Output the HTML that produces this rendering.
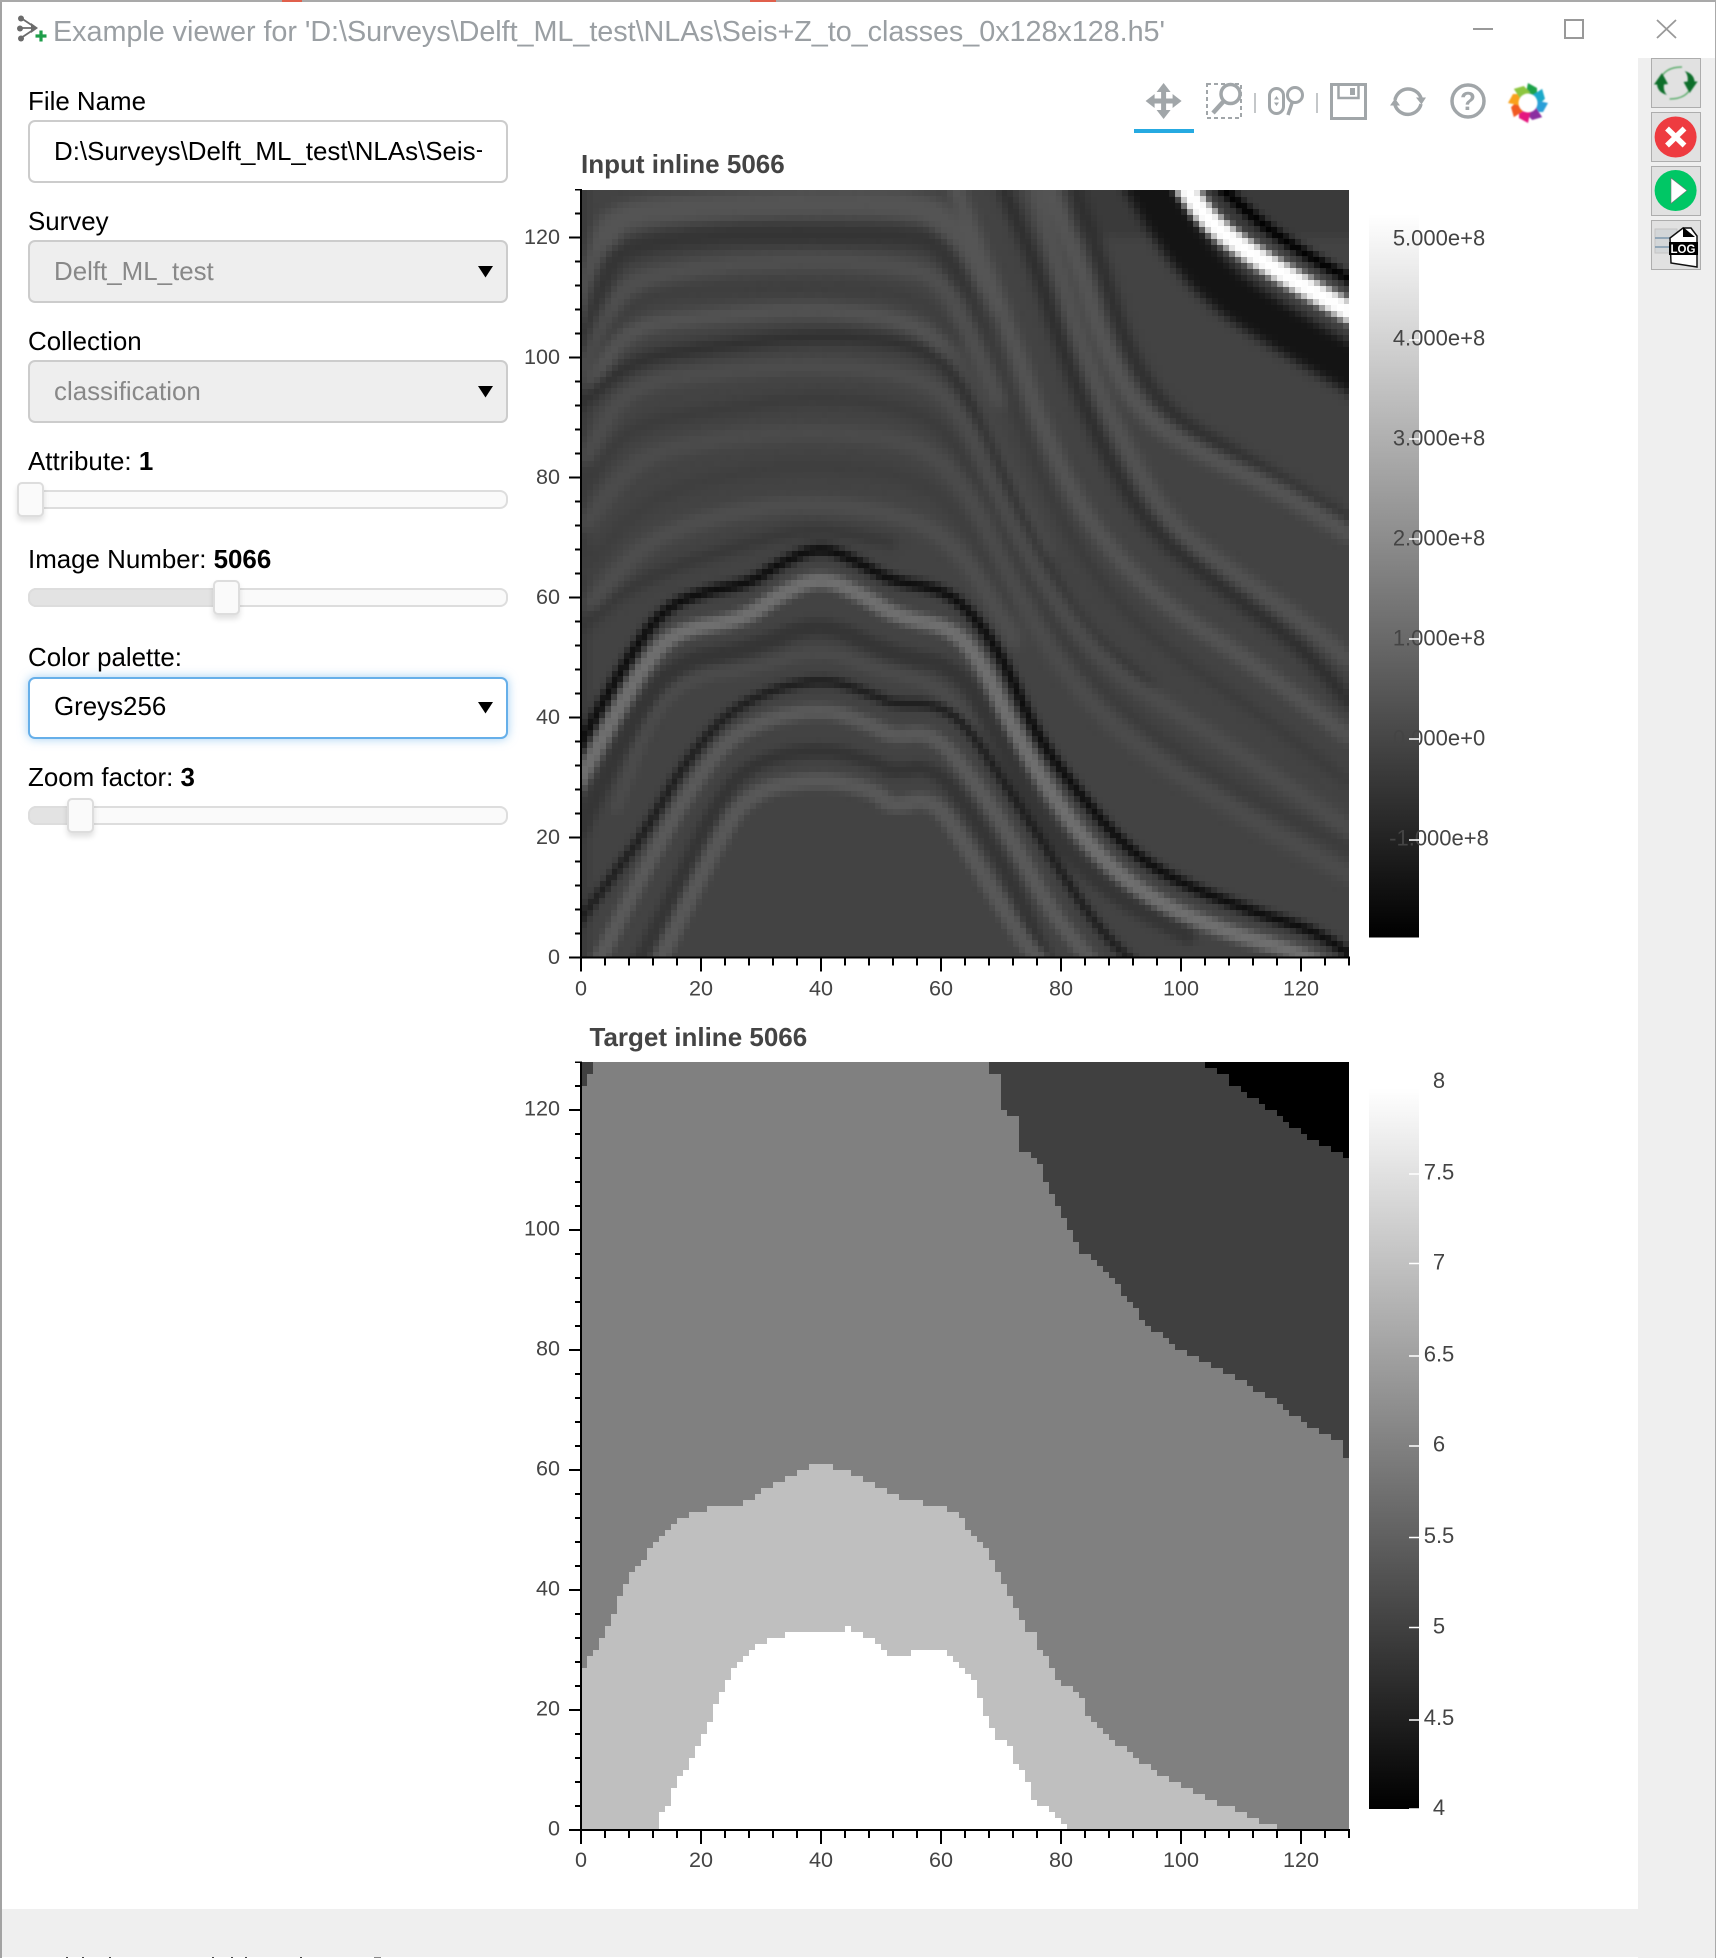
<!DOCTYPE html>
<html><head><meta charset="utf-8"><title>Example viewer</title>
<style>
html,body{margin:0;padding:0;background:#fff;width:1716px;height:1958px;overflow:hidden}
.b{position:absolute;box-sizing:border-box}
.box{left:28px;width:479.5px;border:2.5px solid #ccc;border-radius:7px;background:#fff}
.dis{background:#eee}
.track{left:28px;width:479.5px;height:19px;border:2px solid #ddd;border-radius:8px;background:#fafafa}
.fill{height:19px;border:2px solid #ddd;border-radius:8px 0 0 8px;background:#e3e3e3;border-right:0}
.h{width:27px;height:35px;border:2px solid #ddd;border-radius:5px;background:#fafafa;box-shadow:0 4px 6px rgba(0,0,0,.12)}
svg{position:absolute;left:0;top:0}
text{font-family:"Liberation Sans",Arial,sans-serif}
.l{font-size:25.9px;fill:#000}
.t{font-size:21.6px;fill:#444}
.c{font-size:22px;fill:#444;text-anchor:middle}
.x{text-anchor:middle}
.y{text-anchor:end}
.tt{font-size:26px;font-weight:bold;fill:#444}
</style></head><body>
<div class="b" style="left:1638px;top:58px;width:78px;height:1900px;background:#efefef"></div>
<div class="b" style="left:0;top:1909px;width:1716px;height:48px;background:#efefef"></div>
<div class="b" style="left:0;top:0;width:2px;height:1958px;background:#a3a3a3"></div>
<div class="b" style="left:1715px;top:0;width:1px;height:1958px;background:#aaa"></div>
<div class="b" style="left:0;top:0;width:1716px;height:2px;background:#a9a9a9"></div>
<div class="b" style="left:282px;top:0;width:20px;height:2px;background:#e0604c"></div>
<div class="b" style="left:750px;top:0;width:26px;height:2px;background:#e0604c"></div>

<div class="b box" style="top:120px;height:62.5px"></div>
<div class="b box dis" style="top:240px;height:62.5px"></div>
<div class="b box dis" style="top:360px;height:62.5px"></div>
<div class="b track" style="top:490px"></div>
<div class="b h" style="left:17px;top:482px"></div>
<div class="b track" style="top:588px"></div>
<div class="b fill" style="left:28px;top:588px;width:190px"></div>
<div class="b h" style="left:213px;top:580px"></div>
<div class="b box" style="top:676.5px;height:62.5px;border-color:#66afe9;box-shadow:0 0 10px rgba(102,175,233,.6)"></div>
<div class="b track" style="top:806px"></div>
<div class="b fill" style="left:28px;top:806px;width:45px"></div>
<div class="b h" style="left:67px;top:798px"></div>

<div class="b" style="left:66px;top:1957px;width:2px;height:1px;background:#444"></div>
<div class="b" style="left:82px;top:1957px;width:2px;height:1px;background:#444"></div>
<div class="b" style="left:109px;top:1957px;width:2px;height:1px;background:#444"></div>
<div class="b" style="left:212px;top:1957px;width:2px;height:1px;background:#444"></div>
<div class="b" style="left:231px;top:1957px;width:2px;height:1px;background:#444"></div>
<div class="b" style="left:245px;top:1957px;width:2px;height:1px;background:#444"></div>
<div class="b" style="left:300px;top:1957px;width:2px;height:1px;background:#444"></div>
<div class="b" style="left:374px;top:1957px;width:7px;height:1px;background:#888"></div>

<svg width="1716" height="1958" viewBox="0 0 1716 1958" xmlns="http://www.w3.org/2000/svg">
<defs>
<linearGradient id="g" x1="0" y1="0" x2="0" y2="1"><stop offset="0" stop-color="#fff"/><stop offset="1" stop-color="#000"/></linearGradient>
<clipPath id="cp"><rect x="40" y="125" width="442" height="52"/></clipPath>
<filter id="bl" x="-10%" y="-10%" width="120%" height="120%" color-interpolation-filters="sRGB"><feGaussianBlur stdDeviation="10"/></filter>
<filter id="bl2" x="-10%" y="-10%" width="120%" height="120%" color-interpolation-filters="sRGB"><feGaussianBlur stdDeviation="6.5"/></filter>
<filter id="sb" x="-20%" y="-20%" width="140%" height="140%"><feGaussianBlur stdDeviation=".7"/></filter>
<filter id="pix" filterUnits="userSpaceOnUse" primitiveUnits="userSpaceOnUse" x="0" y="0" width="768" height="768" color-interpolation-filters="sRGB">
<feFlood x="3" y="3" width="1" height="1" flood-color="#000"/>
<feComposite width="6" height="6"/>
<feTile result="a"/>
<feComposite in="SourceGraphic" in2="a" operator="in"/>
<feMorphology operator="dilate" radius="3"/>
</filter>
</defs>

<!-- title bar -->
<g stroke="#6b6b6b" stroke-width="1.8" fill="#6b6b6b">
<path d="M21 18L36 28M20 28H36M21 38L36 28" fill="none"/>
<circle cx="21" cy="18.5" r="3" stroke="none"/><circle cx="20" cy="28.5" r="3" stroke="none"/><circle cx="21" cy="38.5" r="3" stroke="none"/>
<path d="M31 23l7 5-7 5z" stroke="none"/>
</g>
<path d="M41 30.5v11M35.5 36h11" stroke="#1e9e4a" stroke-width="3.2"/>
<text x="53" y="41" font-size="28.8" fill="#9a9fa3" textLength="1112" lengthAdjust="spacing">Example viewer for 'D:\Surveys\Delft_ML_test\NLAs\Seis+Z_to_classes_0x128x128.h5'</text>
<path d="M1473 29h20" stroke="#999" stroke-width="2"/>
<rect x="1565" y="20" width="18" height="18" fill="none" stroke="#999" stroke-width="2"/>
<path d="M1657 20l19 18M1676 20l-19 18" stroke="#999" stroke-width="1.8"/>

<!-- widgets text -->
<text class="l" x="28" y="110">File Name</text>
<g clip-path="url(#cp)"><text class="l" x="54" y="160">D:\Surveys\Delft_ML_test\NLAs\Seis+Z_to_classes_0x128x128.h5</text></g>
<text class="l" x="28" y="230">Survey</text>
<text class="l" x="54" y="280" style="fill:#888">Delft_ML_test</text>
<path d="M478 266h15l-7.5 11.5z" fill="#000"/>
<text class="l" x="28" y="350">Collection</text>
<text class="l" x="54" y="400" style="fill:#888">classification</text>
<path d="M478 386h15l-7.5 11.5z" fill="#000"/>
<text class="l" x="28" y="470">Attribute: <tspan font-weight="bold">1</tspan></text>
<text class="l" x="28" y="568">Image Number: <tspan font-weight="bold">5066</tspan></text>
<text class="l" x="28" y="666">Color palette:</text>
<text class="l" x="54" y="715">Greys256</text>
<path d="M478 702h15l-7.5 11.5z" fill="#000"/>
<text class="l" x="28" y="786">Zoom factor: <tspan font-weight="bold">3</tspan></text>

<!-- bokeh toolbar -->
<g fill="#a1a6a9">
<path transform="translate(1163.6 101)" d="M0-18L7-9H2.5V-2.5H9V-7L18 0 9 7V2.5H2.5V9H7L0 18-7 9H-2.5V2.5H-9V7L-18 0-9-7V-2.5H-2.5V-9H-7Z"/>
<rect x="1134" y="129" width="60" height="4" fill="#26aae1"/>
<rect x="1254" y="93" width="2" height="20" fill="#c4c7c9"/>
<rect x="1316" y="93" width="2" height="20" fill="#c4c7c9"/>
</g>
<g fill="none" stroke="#a1a6a9">
<rect x="1207" y="84" width="34" height="34" stroke-width="2" stroke-dasharray="4 3"/>
<circle cx="1230.5" cy="94" r="9.5" stroke-width="3.5" fill="#fff"/>
<path d="M1223 102l-10 11" stroke-width="4.5"/>
<rect x="1269.5" y="88.5" width="14" height="25" rx="7" stroke-width="3"/>
<path d="M1276.5 96l-2.5 3.5h5zM1276.5 106l-2.5-3.5h5z" fill="#a1a6a9" stroke="none"/>
<circle cx="1295" cy="95" r="7.5" stroke-width="3"/>
<path d="M1292 103l-4 12" stroke-width="3.5"/>
<rect x="1331.5" y="84.5" width="34" height="34" stroke-width="3"/>
<path d="M1338.5 85v13h20V85" stroke-width="2.5"/>
<rect x="1350" y="88" width="5" height="7" fill="#a1a6a9" stroke="none"/>
<path d="M1395 100A13.5 13.5 0 0 1 1421 98M1421 104A13.5 13.5 0 0 1 1395 105" stroke-width="3.5"/>
<path d="M1416 97.5h10l-4.5 7zM1390 105.5h10l-5-7z" fill="#a1a6a9" stroke="none"/>
<circle cx="1468" cy="101" r="16" stroke-width="3.5"/>
</g>
<text x="1468" y="110" font-size="26" font-weight="bold" text-anchor="middle" fill="#a1a6a9">?</text>
<g transform="translate(1528 103)">
<g filter="url(#sb)">
<path transform="rotate(0)" d="M0-20L9-15 9-6-3-6Z" fill="#1fa24a"/>
<path transform="rotate(45)" d="M0-20L9-15 9-6-3-6Z" fill="#1fa9c9"/>
<path transform="rotate(90)" d="M0-20L9-15 9-6-3-6Z" fill="#2b9fd8"/>
<path transform="rotate(135)" d="M0-20L9-15 9-6-3-6Z" fill="#8b2fa0"/>
<path transform="rotate(180)" d="M0-20L9-15 9-6-3-6Z" fill="#e5157f"/>
<path transform="rotate(225)" d="M0-20L9-15 9-6-3-6Z" fill="#f15a22"/>
<path transform="rotate(270)" d="M0-20L9-15 9-6-3-6Z" fill="#f9a11b"/>
<path transform="rotate(315)" d="M0-20L9-15 9-6-3-6Z" fill="#8dc63f"/>
</g>
<circle r="9.5" fill="#fff" filter="url(#sb)"/>
</g>

<!-- right toolbar -->
<g fill="#e1e1e1" stroke="#adadad" stroke-width="1">
<rect x="1651.5" y="58.5" width="49" height="49"/>
<rect x="1651.5" y="112.5" width="49" height="49"/>
<rect x="1651.5" y="166.5" width="49" height="49"/>
<rect x="1651.5" y="220.5" width="49" height="49"/>
</g>
<g id="ra" filter="url(#sb)">
<path d="M1661 80C1662 72 1670 67 1682 67" fill="none" stroke="#5fae6e" stroke-width="1.5"/>
<path d="M1654 84.5L1662 73 1668 84 1664 84.5C1663.500 88 1664 92 1667 95 1660 93 1657.500 89 1657 84.500Z" fill="#0f6e2c"/>
<path transform="rotate(180 1675.800 83)" d="M1661 80C1662 72 1670 67 1682 67" fill="none" stroke="#5fae6e" stroke-width="1.500"/>
<path transform="rotate(180 1675.800 83)" d="M1654 84.5L1662 73 1668 84 1664 84.5C1663.500 88 1664 92 1667 95 1660 93 1657.500 89 1657 84.500Z" fill="#0f6e2c"/>
</g>
<ellipse cx="1675.6" cy="137" rx="21" ry="20.5" fill="#ee3b40"/>
<path d="M1667 128.5l17.5 17M1684.5 128.5l-17.5 17" stroke="#fff" stroke-width="5.5"/>
<ellipse cx="1675.6" cy="190.5" rx="21" ry="20.5" fill="#00c765"/>
<path d="M1671 178l16 12.5-16 13z" fill="#fff" stroke="#777" stroke-width=".6"/>
<g>
<rect x="1655" y="229" width="22" height="24" fill="#d3d6d8" stroke="#c4c4c4"/>
<path d="M1655 238h22M1655 247h22" stroke="#7d97ad" stroke-width="1.5"/>
<path d="M1670 238l13-10 8 0 6 8v31l-26-4z" fill="#fff" stroke="#111" stroke-width="1.5"/>
<path d="M1683 227l12 10h-12z" fill="#000"/>
<rect x="1669" y="242" width="29" height="13" fill="#000"/>
<text x="1683" y="253" font-size="11.500" font-weight="bold" fill="#fff" text-anchor="middle">LOG</text>
</g>

<!-- plot 1 -->
<text class="tt" x="581" y="173">Input inline 5066</text>
<svg x="581" y="190" width="768" height="768" viewBox="0 0 768 768">
<rect width="768" height="768" fill="#434343"/>
<g filter="url(#pix)">
<rect width="768" height="768" fill="#434343"/>
<g transform="scale(.5103) translate(-41 -38)">
<g filter="url(#bl)" fill="none" stroke-linejoin="round" stroke-linecap="round">
<rect x="0" y="0" width="55" height="1600" fill="#3a3a3a" stroke="none"/>
<rect x="1000" y="0" width="600" height="130" fill="#3a3a3a" stroke="none"/>
<polyline stroke="#545454" stroke-width="50" points="50,280 80,150 110,85 300,70 510,62 730,68 775,130 830,260"/>
<polyline stroke="#343434" stroke-width="42" points="50,340 85,210 120,150 300,125 510,125 700,128 750,150 800,240 850,380"/>
<polyline stroke="#505050" stroke-width="30" points="50,390 90,290 130,215 300,185 510,175 700,190 760,230 800,310 860,450"/>
<polyline stroke="#3d3d3d" stroke-width="22" points="60,400 130,250 300,232 510,228 700,240 780,330"/>
<polyline stroke="#555" stroke-width="26" points="60,420 130,305 300,285 510,270 700,295 780,380 860,560 950,750"/>
<polyline stroke="#2f2f2f" stroke-width="28" points="40,460 140,370 300,345 510,320 700,340 780,400 850,560 930,740 1020,900 1150,1010"/>
<polyline stroke="#4e4e4e" stroke-width="26" points="50,560 130,420 300,395 510,380 700,400 790,470 860,640 960,830 1080,980 1300,1120 1546,1290"/>
<polyline stroke="#3b3b3b" stroke-width="28" points="50,620 130,500 300,470 510,440 710,470 790,550 870,730 980,920 1100,1060 1300,1200 1546,1330"/>
<polyline stroke="#4c4c4c" stroke-width="30" points="50,690 150,560 300,525 510,510 700,530 800,620 880,800 1000,1000 1130,1130 1350,1270 1546,1380"/>
<polyline stroke="#3e3e3e" stroke-width="30" points="50,780 170,640 350,590 510,575 700,600 800,690 880,860"/>
<polyline stroke="#4f4f4f" stroke-width="28" points="60,850 170,720 350,665 510,650 700,680 800,760 890,920"/>
<polyline stroke="#363636" stroke-width="24" points="40,900 150,800 400,720 510,700 650,730"/>
<!-- right family -->
<polyline stroke="#2e2e2e" stroke-width="30" points="1010,38 1060,180 1110,350 1190,480 1350,570 1546,690"/>
<polyline stroke="#565656" stroke-width="30" points="960,38 1020,190 1060,330 1130,470 1250,550 1400,620 1546,710"/>
<polyline stroke="#545454" stroke-width="26" points="930,38 975,180 1020,340 1090,510 1190,690 1320,790 1450,880 1546,960"/>
<polyline stroke="#2d2d2d" stroke-width="30" points="870,38 930,180 980,340 1050,520 1150,700 1300,820 1450,930 1546,1040"/>
<polyline stroke="#565656" stroke-width="26" points="770,20 830,180 890,340 950,520 1040,700 1180,850 1350,960 1546,1110"/>
<polyline stroke="#3a3a3a" stroke-width="22" points="820,250 880,440 950,620 1030,770 1150,910 1350,1050 1546,1200"/>
<!-- top right -->
<polyline stroke="#141414" stroke-width="90" points="1140,10 1210,130 1290,225 1400,300 1570,400"/>
</g>
<g filter="url(#bl2)" fill="none" stroke-linejoin="round" stroke-linecap="round">
<polyline stroke="#000" stroke-width="24" points="1280,20 1380,110 1470,170 1570,225"/>
<polyline stroke="#fff" stroke-width="36" points="1210,10 1270,100 1350,160 1430,210 1500,250 1570,290"/>
<!-- strong horizons -->
<polyline stroke="#353535" stroke-width="36" points="40,1290 150,1060 230,960 370,940 510,880 650,950 780,970 860,1110 950,1290 1080,1420 1230,1500"/>
<polyline stroke="#4b4b4b" stroke-width="20" points="110,1250 180,1060 260,990 370,980 510,935 620,980 760,1010 850,1170 950,1330"/>
<polyline stroke="#0c0c0c" stroke-width="23" points="30,1140 130,960 200,860 280,825 370,810 430,770 510,735 580,765 650,805 750,820 810,870 870,960 930,1100 1000,1200 1100,1320 1200,1390 1350,1450 1480,1490 1560,1545"/>
<polyline stroke="#707070" stroke-width="26" points="30,1210 100,1080 170,960 230,900 360,880 430,830 510,795 590,830 660,875 770,895 830,970 880,1080 960,1220 1050,1340 1160,1430 1300,1490 1440,1530 1500,1560"/>
<polyline stroke="#1c1c1c" stroke-width="20" points="30,1480 120,1360 170,1290 250,1150 350,1040 510,990 620,1030 650,1045 740,1045 800,1090 870,1200 960,1340 1050,1480 1130,1560"/>
<polyline stroke="#5a5a5a" stroke-width="26" points="70,1560 160,1380 260,1200 350,1090 510,1050 620,1090 650,1110 730,1100 800,1180 880,1300 960,1450 1050,1560"/>
<polyline stroke="#343434" stroke-width="30" points="150,1560 230,1400 300,1250 370,1160 510,1130 620,1160 650,1180 730,1165 800,1250 880,1380 960,1560"/>
<polyline stroke="#585858" stroke-width="28" points="190,1560 300,1330 370,1215 510,1190 620,1215 650,1250 730,1225 800,1330 900,1500 950,1560"/>
</g></g></g>
</svg>

<!-- plot 2 -->
<text class="tt" x="589.5" y="1046">Target inline 5066</text>
<svg x="581" y="1062" width="768" height="768" viewBox="0 0 128 128" shape-rendering="crispEdges">
<rect width="128" height="128" fill="#808080"/>
<path fill="#404040" d="M0 0H2V2H1V4H0Z"/>
<path fill="#404040" d="M68 0V2H70V8H71V9H73V15H75V16H76V17H77V20H78V22H79V24H80V26H81V28H82V30H83V32H85V33H86V34H87V35H88V36H89V37H90V39H91V40H92V41H93V43H94V44H95V45H97V46H98V47H99V48H101V49H103V50H105V51H107V52H109V53H111V54H112V55H114V56H116V57H117V58H118V59H120V60H121V61H123V62H125V63H127V66H128V0Z"/>
<path fill="#000" d="M104 0V1H106V2H108V4H110V5H111V6H113V7H114V8H116V9H117V10H118V11H120V12H121V13H123V14H125V15H127V16H128V0Z"/>
<path fill="#bfbfbf" d="M0 128V101H1V99H2V98H3V96H4V94H5V92H6V89H7V87H8V85H9V84H10V83H11V81H12V80H13V79H14V78H15V77H16V76H18V75H21V74H27V73H29V72H30V71H32V70H34V69H36V68H38V67H42V68H45V69H47V70H49V71H51V72H53V73H57V74H61V75H63V76H64V78H65V79H66V80H67V81H68V83H69V85H70V87H71V89H72V91H73V93H74V95H76V98H77V99H78V101H79V103H80V104H82V105H83V106H84V109H85V110H86V111H87V112H88V113H89V114H91V115H92V116H93V117H95V118H96V119H98V120H100V121H102V122H104V123H106V124H109V125H111V126H113V127H116V128Z"/>
<path fill="#fff" d="M13 128V125H14V124H15V121H16V119H17V118H18V116H19V114H20V112H21V110H22V107H23V105H24V103H25V101H26V100H27V99H28V98H29V97H31V96H34V95H44V94H45V95H47V96H49V97H50V98H51V99H55V98H61V99H62V100H63V101H64V102H65V103H66V106H67V109H68V111H69V113H71V114H72V117H73V118H74V120H75V123H76V124H78V125H79V126H80V127H81V128Z"/>
</svg>

<!-- axes -->
<g fill="none" stroke="#000">
<path d="M581 189V958.5M580 957.5H1350" stroke-width="2"/>
<path d="M575 958.5V189" stroke-width="12" stroke-dasharray="2 118"/>
<path d="M578 958.5V189" stroke-width="6" stroke-dasharray="2 22"/>
<path d="M580 964.5H1350" stroke-width="14" stroke-dasharray="2 118"/>
<path d="M580 961.5H1350" stroke-width="8" stroke-dasharray="2 22"/>
<path d="M581 1061.5V1831M580 1830H1350" stroke-width="2"/>
<path d="M575 1831V1061.5" stroke-width="12" stroke-dasharray="2 118"/>
<path d="M578 1831V1061.5" stroke-width="6" stroke-dasharray="2 22"/>
<path d="M580 1837H1350" stroke-width="14" stroke-dasharray="2 118"/>
<path d="M580 1834H1350" stroke-width="8" stroke-dasharray="2 22"/>
</g>
<g>
<text class="t y" x="560" y="244">120</text><text class="t y" x="560" y="364">100</text><text class="t y" x="560" y="484">80</text><text class="t y" x="560" y="604">60</text><text class="t y" x="560" y="724">40</text><text class="t y" x="560" y="844">20</text><text class="t y" x="560" y="964">0</text>
<text class="t x" x="581" y="995.5">0</text><text class="t x" x="701" y="995.5">20</text><text class="t x" x="821" y="995.5">40</text><text class="t x" x="941" y="995.5">60</text><text class="t x" x="1061" y="995.5">80</text><text class="t x" x="1181" y="995.5">100</text><text class="t x" x="1301" y="995.5">120</text>
<text class="t y" x="560" y="1115.5">120</text><text class="t y" x="560" y="1235.5">100</text><text class="t y" x="560" y="1355.5">80</text><text class="t y" x="560" y="1475.5">60</text><text class="t y" x="560" y="1595.5">40</text><text class="t y" x="560" y="1715.5">20</text><text class="t y" x="560" y="1835.5">0</text>
<text class="t x" x="581" y="1867">0</text><text class="t x" x="701" y="1867">20</text><text class="t x" x="821" y="1867">40</text><text class="t x" x="941" y="1867">60</text><text class="t x" x="1061" y="1867">80</text><text class="t x" x="1181" y="1867">100</text><text class="t x" x="1301" y="1867">120</text>
</g>

<!-- colorbars -->
<rect x="1369" y="214" width="50" height="723.5" fill="url(#g)"/>
<rect x="1369" y="1088.5" width="50" height="720.5" fill="url(#g)"/>
<g>
<text class="c" x="1439" y="245.5">5.000e+8</text>
<text class="c" x="1439" y="345.5">4.000e+8</text>
<text class="c" x="1439" y="445.5">3.000e+8</text>
<text class="c" x="1439" y="545.5">2.000e+8</text>
<text class="c" x="1439" y="645.5">1.000e+8</text>
<text class="c" x="1439" y="745.5">0.000e+0</text>
<text class="c" x="1439" y="845.5">-1.000e+8</text>
<text class="c" x="1439" y="1088">8</text>
<text class="c" x="1439" y="1179.5">7.5</text>
<text class="c" x="1439" y="1269.5">7</text>
<text class="c" x="1439" y="1361.5">6.5</text>
<text class="c" x="1439" y="1451.5">6</text>
<text class="c" x="1439" y="1543">5.5</text>
<text class="c" x="1439" y="1633.5">5</text>
<text class="c" x="1439" y="1725">4.5</text>
<text class="c" x="1439" y="1815">4</text>
</g>
<path stroke="#fff" stroke-width="1.6" d="M1409 340h10M1409 439h10M1409 539h10M1409 639h10M1409 739h10M1409 840h10M1409 1174h10M1409 1263.5h10M1409 1356h10M1409 1446h10M1409 1537.5h10M1409 1627.5h10M1409 1720h10M1409 1809h10"/>
</svg>
<script>
document.querySelectorAll('polyline').forEach(function(e){
  var p=e.getAttribute('points').trim().split(/\s+/).map(function(s){return s.split(',').map(Number)});
  for(var k=0;k<3;k++){
    var q=[p[0]];
    for(var i=0;i<p.length-1;i++){
      q.push([p[i][0]*.75+p[i+1][0]*.25,p[i][1]*.75+p[i+1][1]*.25]);
      q.push([p[i][0]*.25+p[i+1][0]*.75,p[i][1]*.25+p[i+1][1]*.75]);
    }
    q.push(p[p.length-1]);p=q;
  }
  e.setAttribute('points',p.map(function(a){return a[0].toFixed(1)+','+a[1].toFixed(1)}).join(' '));
});
</script>
</body></html>
